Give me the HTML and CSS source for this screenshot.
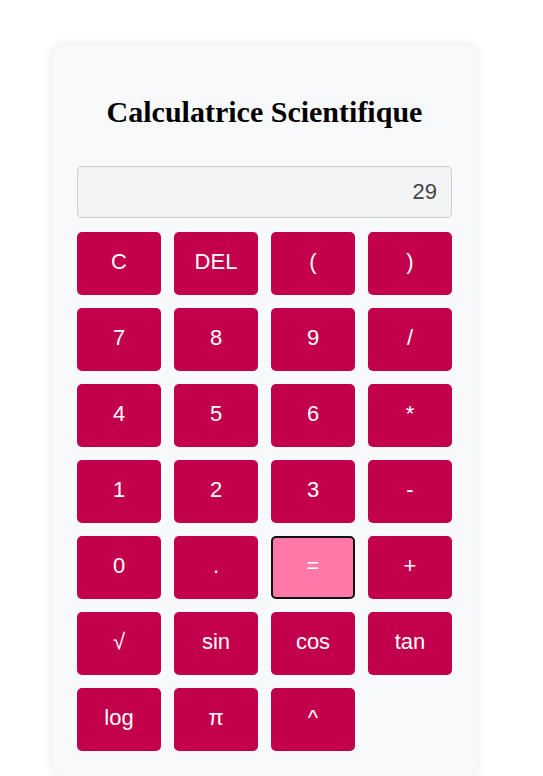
FILE: index.html
```html
<!DOCTYPE html>
<html lang="fr">
<head>
<meta charset="utf-8">
<title>Calculatrice Scientifique</title>
<link rel="stylesheet" href="styles.css">
</head>
<body>
<div class="calc">
  <h1 class="title">Calculatrice Scientifique</h1>
  <div class="display">29</div>
  <div class="keys">
    <button class="key">C</button>
    <button class="key">DEL</button>
    <button class="key">(</button>
    <button class="key">)</button>
    <button class="key">7</button>
    <button class="key">8</button>
    <button class="key">9</button>
    <button class="key">/</button>
    <button class="key">4</button>
    <button class="key">5</button>
    <button class="key">6</button>
    <button class="key">*</button>
    <button class="key">1</button>
    <button class="key">2</button>
    <button class="key">3</button>
    <button class="key">-</button>
    <button class="key">0</button>
    <button class="key">.</button>
    <button class="key key-active">=</button>
    <button class="key">+</button>
    <button class="key">√</button>
    <button class="key">sin</button>
    <button class="key">cos</button>
    <button class="key">tan</button>
    <button class="key">log</button>
    <button class="key">π</button>
    <button class="key">^</button>
  </div>
</div>
</body>
</html>
```
FILE: styles.css
```css
html, body {
  margin: 0;
  padding: 0;
  background: #ffffff;
}
body {
  font-family: "Liberation Sans", Arial, sans-serif;
}
.calc {
  box-sizing: border-box;
  width: 425px;
  margin: 45px 0 0 52px;
  padding: 25px 25px 25px;
  background: #f8f9fa;
  border-radius: 12px;
  box-shadow: 0 0 10px rgba(0, 0, 0, 0.1);
}
.title {
  font-family: "Liberation Serif", "Times New Roman", serif;
  font-weight: bold;
  font-size: 30px;
  line-height: 32px;
  text-align: center;
  margin: 26px 0 38px;
  color: #000;
}
.display {
  box-sizing: border-box;
  height: 52px;
  border: 1px solid #cccccc;
  border-radius: 5px;
  background: #f1f3f5;
  color: #444;
  font-size: 22px;
  line-height: 50px;
  text-align: right;
  padding: 0 14px;
  margin-bottom: 14px;
}
.keys {
  display: grid;
  grid-template-columns: repeat(4, 84px);
  grid-auto-rows: 63px;
  gap: 13px;
}
.key {
  border: none;
  border-radius: 5px;
  background: #c2004b;
  color: #ffffff;
  font-family: "Liberation Sans", Arial, sans-serif;
  font-size: 22px;
  padding: 0 0 3px;
}
.key-active {
  background: #ff78a8;
  border: 2px solid #111;
}
```
